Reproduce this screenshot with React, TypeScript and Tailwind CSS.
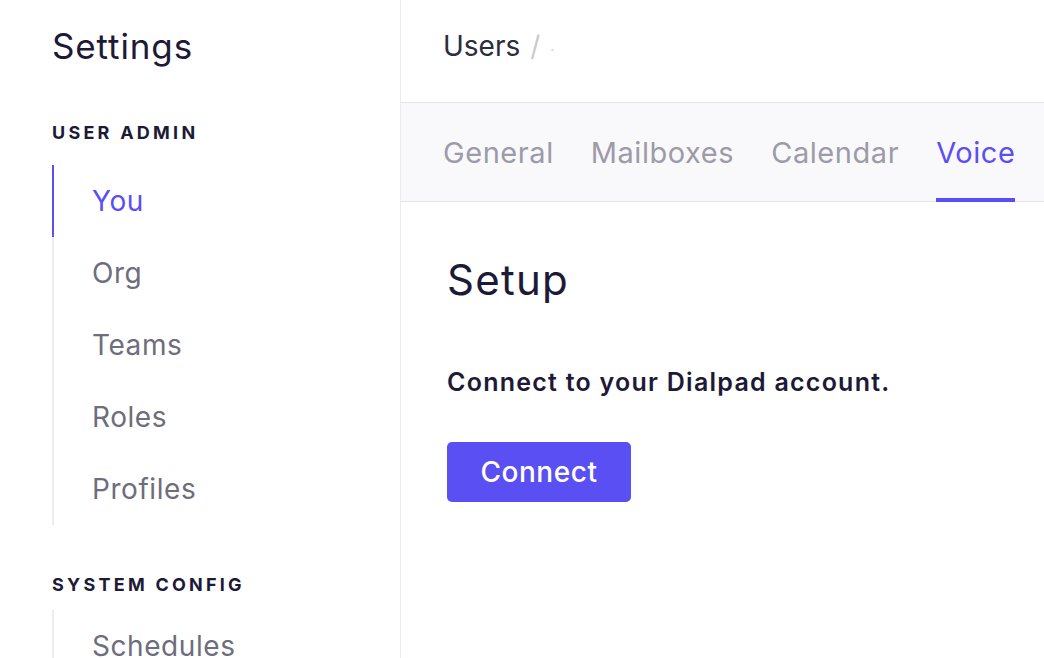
const userAdmin = ['You', 'Org', 'Teams', 'Roles', 'Profiles'];
const tabs = ['General', 'Mailboxes', 'Calendar', 'Voice'];

function NavGroup({ title, items, active }: { title: string; items: string[]; active?: string }) {
  return (
    <div>
      <div className="text-[18px] font-bold tracking-[0.18em] text-[#1c1a36] leading-none">{title}</div>
      <ul className="mt-[16px] border-l-2 border-[#ececf0]">
        {items.map((item) => (
          <li
            key={item}
            className={
              item === active
                ? '-ml-[2px] border-l-2 border-[#5a4ff3] pl-[38px] h-[72px] flex items-center text-[#5a4ff3]'
                : '-ml-[2px] border-l-2 border-transparent pl-[38px] h-[72px] flex items-center text-[#6e6d7c]'
            }
          >
            {item}
          </li>
        ))}
      </ul>
    </div>
  );
}

export default function App() {
  return (
    <div className="flex h-[658px] w-[1044px] overflow-hidden bg-white font-['Inter',sans-serif] text-[28px] tracking-[0.02em]">
      <aside className="w-[401px] shrink-0 border-r border-[#ececf0] pl-[52px] pt-[24px]">
        <h1 className="text-[35px] leading-[44px] tracking-[0.025em] text-[#1c1a36]">Settings</h1>
        <div className="mt-[56px] flex flex-col gap-[51px]">
          <div className="[&_ul]:mt-[23px]">
            <NavGroup title="USER ADMIN" items={userAdmin} active="You" />
          </div>
          <div className="[&_ul]:mt-[16px]">
            <NavGroup title="SYSTEM CONFIG" items={['Schedules']} />
          </div>
        </div>
      </aside>

      <main className="flex-1 min-w-0">
        <div className="h-[103px] border-b border-[#e4e4ea] pl-[42px] pt-[26px]">
          <div className="flex items-center gap-[10px] leading-[40px] tracking-normal text-[#2d2c3e]">
            <span>Users</span>
            <span className="text-[#c9c9d2]">/</span>
            <span className="text-[#c9c9d2] text-[14px]">.</span>
          </div>
        </div>

        <div className="flex h-[99px] gap-[37px] border-b border-[#e4e4ea] bg-[#f9f9fb] pl-[42px] text-[29px]">
          {tabs.map((t) => (
            <div
              key={t}
              className={
                t === 'Voice'
                  ? 'flex items-center border-b-[4px] border-[#5a4ff3] pt-[4px] text-[#5a4ff3] -mb-px'
                  : 'flex items-center border-b-[4px] border-transparent pt-[4px] text-[#9c9ba8] -mb-px'
              }
            >
              {t}
            </div>
          ))}
        </div>

        <div className="pl-[46px] pt-[52px]">
          <h2 className="text-[42px] leading-[52px] tracking-[0.03em] text-[#1c1a36]">Setup</h2>
          <p className="mt-[60px] text-[25px] font-semibold leading-[32px] tracking-[0.05em] text-[#1c1a36]">
            Connect to your Dialpad account.
          </p>
          <button className="mt-[44px] h-[60px] w-[184px] rounded-[5px] bg-[#5a4ff3] text-[28px] font-medium text-white">
            Connect
          </button>
        </div>
      </main>
    </div>
  );
}
